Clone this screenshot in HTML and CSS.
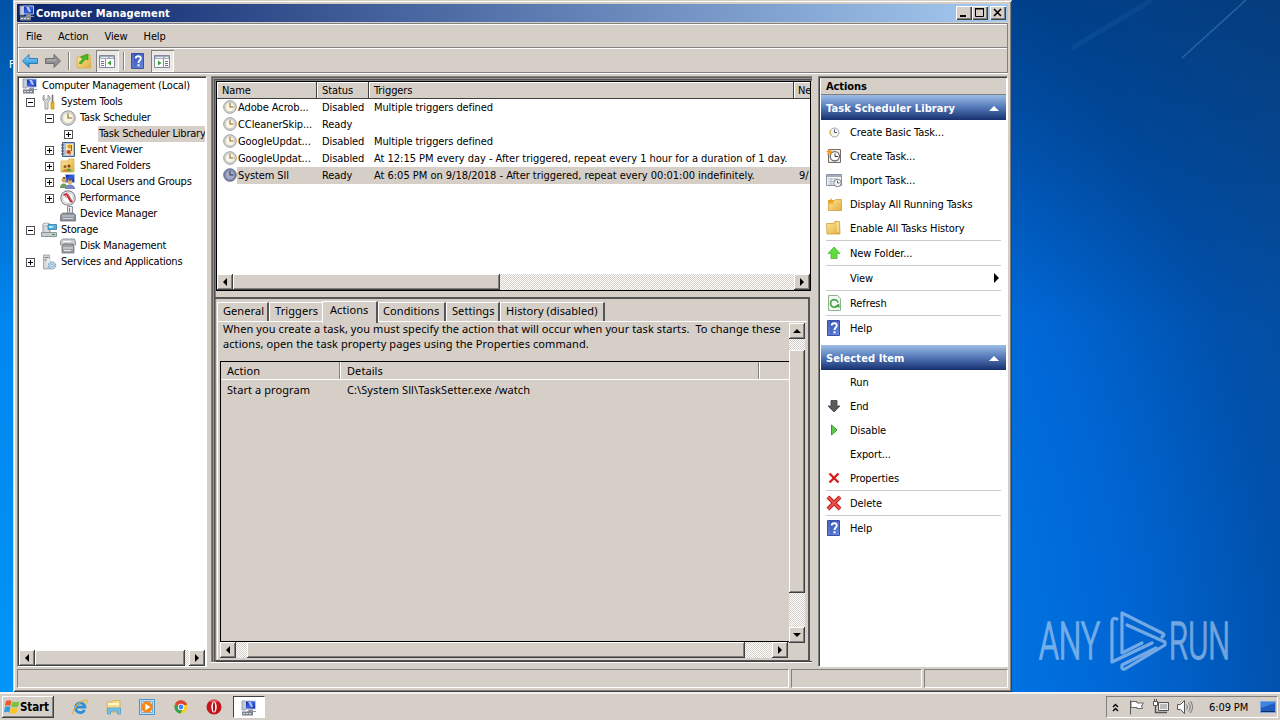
FILE: index.html
```html
<!DOCTYPE html>
<html lang="en">
<head>
  <meta charset="UTF-8">
  <title>Computer Management</title>
  <link rel="stylesheet" href="styles.css">
</head>
<body>
  <!-- Icon sprite -->
  <svg width="0" height="0" class="sprite">
    <defs>
      <linearGradient id="gBlue" x1="0" y1="0" x2="0" y2="1"><stop offset="0" stop-color="#8fdcff"/><stop offset="1" stop-color="#1583d0"/></linearGradient>
      <linearGradient id="gHelp" x1="0" y1="0" x2="1" y2="1"><stop offset="0" stop-color="#2a48ae"/><stop offset="1" stop-color="#6a8ce0"/></linearGradient>
      <linearGradient id="gFolder" x1="0" y1="0" x2="1" y2="1"><stop offset="0" stop-color="#fbe79c"/><stop offset="1" stop-color="#e3ae3c"/></linearGradient>
      <linearGradient id="gScreen" x1="0" y1="0" x2="1" y2="1"><stop offset="0" stop-color="#0a1f9c"/><stop offset=".5" stop-color="#3c62e0"/><stop offset="1" stop-color="#10258c"/></linearGradient>
    </defs>
    <symbol id="i-computer" viewBox="0 0 16 16">
      <path d="M1 1h4v9H1z" fill="#c5cad6" stroke="#8a90a0" stroke-width=".8"/>
      <path d="M4.500 1h10v8h-10z" fill="url(#gScreen)" stroke="#b9c6e4"/>
      <path d="M7 2h3l2 5h-2z" fill="#a8c4fa"/>
      <path d="M8 9.500h4V11h3v1H6z" fill="#9298a4"/>
      <path d="M1 11.500h11v4H1z" fill="#7d8490"/>
      <path d="M2 13.500h9" stroke="#dce0e6" stroke-dasharray="2 1"/>
    </symbol>
    <symbol id="i-tools" viewBox="0 0 16 16">
      <path d="M3 1v4l2 1 2-1V1l2 2v3L7 8v7H4V8L2 6V3z" fill="#d9dcdf" stroke="#85898e" stroke-width=".8"/>
      <path d="M11 1h1v7h-1z" fill="#777" stroke="#777" stroke-width=".6"/>
      <path d="M10 8h3v7h-3z" fill="#f2b81c" stroke="#b98508" stroke-width=".7"/>
    </symbol>
    <symbol id="i-clock" viewBox="0 0 16 16">
      <circle cx="8" cy="8" r="7.200" fill="#dcdcdc" stroke="#8e9094" stroke-width="1"/>
      <circle cx="8" cy="8" r="5.400" fill="#fbf6e2" stroke="#c4c0b0" stroke-width=".8"/>
      <path d="M8 3.500V8h4" fill="none" stroke="#8b6a30" stroke-width="1.200"/>
    </symbol>
    <symbol id="i-clocksel" viewBox="0 0 16 16">
      <circle cx="8" cy="8" r="7.200" fill="#7c86a8" stroke="#5b668c" stroke-width="1"/>
      <circle cx="8" cy="8" r="5.400" fill="#a3abc4" stroke="#7a84a4" stroke-width=".8"/>
      <path d="M8 3.500V8h4" fill="none" stroke="#30395c" stroke-width="1.200"/>
    </symbol>
    <symbol id="i-event" viewBox="0 0 16 16">
      <path d="M2.500.5h12v14h-12z" fill="#a9c0e4" stroke="#4a6288"/>
      <path d="M1 3h3M1 6h3M1 9h3M1 12h3" stroke="#555"/>
      <path d="M6 2h7v11H6z" fill="#f6e7b0"/>
      <circle cx="9.500" cy="4.500" r="2" fill="#e39b1c"/>
      <circle cx="8.500" cy="10" r="2" fill="#d23a2a"/>
      <path d="M10 8v5M11.500 3v6" stroke="#c0522a"/>
    </symbol>
    <symbol id="i-shared" viewBox="0 0 16 16">
      <path d="M1 3h7l1-2h5v13H1z" fill="url(#gFolder)" stroke="#d8b04a" stroke-width=".8"/>
      <circle cx="5" cy="8.500" r="1.500" fill="#9a5a24"/><circle cx="9" cy="8" r="1.500" fill="#6e4a20"/>
      <path d="M6 13.500c0-4 5.500-4 5.500 0z" fill="#5a9a4a"/>
      <path d="M2.500 14c0-4 5-4 5 0z" fill="#d88a34"/>
    </symbol>
    <symbol id="i-users" viewBox="0 0 16 16">
      <path d="M5.500.5h9v8h-9z" fill="url(#gScreen)" stroke="#a8b8dc"/>
      <circle cx="4" cy="6" r="2.500" fill="#d8a060"/>
      <circle cx="10" cy="8" r="2.300" fill="#dfb070"/>
      <path d="M0 14c0-6 7-6 8 0z" fill="#6aa05a"/>
      <path d="M5 15c0-6 10-6 10 0z" fill="#7484c4"/>
      <path d="M3 3.800h2M9 5.800h2" stroke="#6a4a20" stroke-width="1.500"/>
    </symbol>
    <symbol id="i-perf" viewBox="0 0 16 16">
      <circle cx="8" cy="8" r="7.200" fill="#fff" stroke="#8a8a8e" stroke-width="1.200"/>
      <circle cx="8" cy="8" r="5.400" fill="none" stroke="#b8c4d0"/>
      <path d="M3.500 5l3-1 4 7 2 1" fill="none" stroke="#d01c2c" stroke-width="1.700"/>
      <path d="M6.500 8L4 4M12 11L8 4" stroke="#b03040" stroke-width=".8"/>
    </symbol>
    <symbol id="i-device" viewBox="0 0 16 16">
      <path d="M7.500.5h5v8h-5z" fill="#e8eaec" stroke="#8a9098"/>
      <path d="M9 2h1v4H9z" fill="#4a90b0"/>
      <path d="M.5 9l2-2h11l2 2v6H.5z" fill="#8d949c" stroke="#6d747c" stroke-width=".8"/>
      <path d="M2 10h12M3 12.500h10" stroke="#d4d8dc"/>
    </symbol>
    <symbol id="i-storage" viewBox="0 0 16 16">
      <path d="M2 2h7v9H2z" fill="#d6dade" stroke="#8b9298"/>
      <ellipse cx="5.500" cy="2.500" rx="3.500" ry="1.500" fill="#eef0f2" stroke="#8b9298" stroke-width=".7"/>
      <path d="M7 2.500h8.500v5H7z" fill="#4ab0e0" stroke="#3a7ea4" stroke-width=".8"/>
      <path d="M8 4h5l-2 2H8z" fill="#b9e6fa"/>
      <path d="M.5 10.500h15v4H.5z" fill="#c8cdd1" stroke="#8d949a"/>
      <path d="M11 12.500h3" stroke="#389838"/>
    </symbol>
    <symbol id="i-disk" viewBox="0 0 16 16">
      <path d="M.5 3l2-2h12l1 3v3H.5z" fill="#c9cccf" stroke="#7f8488" stroke-width=".8"/>
      <path d="M3 3.500h8" stroke="#fff"/>
      <path d="M2 8l2-2h9l1 3v6H2z" fill="#9b9fa3" stroke="#6e7276" stroke-width=".8"/>
      <path d="M3 10h10M4 12.500h7" stroke="#eceeee"/>
    </symbol>
    <symbol id="i-services" viewBox="0 0 16 16">
      <path d="M2.500 1h6v14h-6z" fill="#d4d8da" stroke="#93999c" stroke-width=".8"/>
      <path d="M3.500 3.500h4M3.500 6h4" stroke="#7b8286"/>
      <path d="M6 4l4 1v7H5z" fill="#e6eaec"/>
      <circle cx="11" cy="11.500" r="3.300" fill="#c8dff0" stroke="#8fb4cc" stroke-width="2" stroke-dasharray="1.800 .8"/>
      <circle cx="11" cy="11.500" r="1.200" fill="#fff" stroke="#6f98b4" stroke-width=".7"/>
    </symbol>
    <symbol id="i-back" viewBox="0 0 16 16"><path d="M.5 8L7 1.500v4h8.500v5H7v4z" fill="url(#gBlue)" stroke="#1a68a4" stroke-width=".8"/></symbol>
    <symbol id="i-forward" viewBox="0 0 16 16"><path d="M15.500 8L9 1.500v4H.5v5H9v4z" fill="#929292" stroke="#5c5c5c" stroke-width=".8"/><path d="M2 7h9" stroke="#b8b8b8"/></symbol>
    <symbol id="i-up" viewBox="0 0 16 16">
      <path d="M1 4h5l1-2h7l1 13H1z" fill="url(#gFolder)" stroke="#d3b050" stroke-width=".8"/>
      <path d="M3 10l4-4-2.500-2L12 1v6L9.500 6 5 11z" fill="#3fbf2c" stroke="#218a18" stroke-width=".6"/>
    </symbol>
    <symbol id="i-panel-l" viewBox="0 0 16 16">
      <path d="M.5 2.500h15v12H.5z" fill="#fbfbfb" stroke="#8089a0"/>
      <path d="M1 3h14v3H1z" fill="#a4acbc"/><path d="M2 4.500h7M11 4.500h3" stroke="#e8ecf4"/>
      <path d="M6.500 6v8" stroke="#8a8f9c"/><path d="M2 8.500h3M2 10.500h3M2 12.500h3" stroke="#6a7690"/>
      <path d="M12 7.500v5L8.500 10z" fill="#3aa03a"/>
    </symbol>
    <symbol id="i-panel-r" viewBox="0 0 16 16">
      <path d="M.5 2.500h15v12H.5z" fill="#fbfbfb" stroke="#8089a0"/>
      <path d="M1 3h14v3H1z" fill="#a4acbc"/><path d="M2 4.500h7M11 4.500h3" stroke="#e8ecf4"/>
      <path d="M9.500 6v8" stroke="#8a8f9c"/><path d="M11 8.500h3M11 10.500h3M11 12.500h3" stroke="#6a7690"/>
      <path d="M4 7.500v5L7.500 10z" fill="#3aa03a"/>
    </symbol>
    <symbol id="i-help" viewBox="0 0 16 16">
      <path d="M1.500.5h12v15h-12z" fill="url(#gHelp)" stroke="#3b52a4"/>
      <path d="M3 1v14" stroke="#7b94da" stroke-width=".8"/>
      <path d="M5.700 5.500C5.700 2.500 10.800 2.500 10.800 5.500c0 2-2.300 2-2.300 4.500" fill="none" stroke="#fff" stroke-width="1.800"/>
      <path d="M7.500 11.300h2v2h-2z" fill="#fff"/>
    </symbol>
    <symbol id="i-basic" viewBox="0 0 16 16">
      <circle cx="8.500" cy="8.500" r="4.500" fill="#f4f3ec" stroke="#9aa4b4"/>
      <path d="M8.500 5.500v3H11" fill="none" stroke="#4c5c80"/><path d="M5 11a4.500 4.500 0 0 1-.5-5" fill="none" stroke="#e0b23c"/>
    </symbol>
    <symbol id="i-create" viewBox="0 0 16 16">
      <path d="M2.500 1.500h12v13h-12z" fill="#eceef0" stroke="#7a6a62"/>
      <circle cx="8.800" cy="8.200" r="4.600" fill="#fff" stroke="#5f6672" stroke-width="1.200"/>
      <path d="M9 5.500v3h3" fill="none" stroke="#333"/>
      <path d="M3.500 0l1 2.500L7 3 5 4.500 5.500 7l-2-1.500L1 7l.8-2.500L0 3l2.500-.5z" fill="#f39a1c"/>
    </symbol>
    <symbol id="i-import" viewBox="0 0 16 16">
      <path d="M.5 2.500h15v11H.5z" fill="#f6f7f9" stroke="#8d95a4"/>
      <path d="M1 4h14" stroke="#a4acb8" stroke-width="2"/>
      <path d="M2 7h10M2 9.500h6M2 12h5M5 6v7" stroke="#a4acb8" stroke-width=".8"/>
      <circle cx="11.500" cy="11" r="3.700" fill="#f8f8f8" stroke="#777e8c"/><path d="M11.500 8.800V11h2" fill="none" stroke="#555c6c"/>
    </symbol>
    <symbol id="i-folder" viewBox="0 0 16 16">
      <path d="M.5 3.500h7l1-2h5l.5 12.500H1z" fill="url(#gFolder)" stroke="#cfa040" stroke-width=".8"/><path d="M12 2v10" stroke="#fff2bc"/>
    </symbol>
    <symbol id="i-folder-run" viewBox="0 0 16 16">
      <path d="M2.500 4.500h6l1-1h6v11h-13z" fill="url(#gFolder)" stroke="#cfa040" stroke-width=".8"/>
      <path d="M5 2l1 2 2.500.3L7 6l.4 2.300L5 7.200 2.700 8.300 3 6 1.500 4.300 4 4z" fill="#f0a31c"/>
    </symbol>
    <symbol id="i-new" viewBox="0 0 16 16"><path d="M8 2l6 6.500h-3V13.500H5V8.500H2z" fill="#5fdc3c" stroke="#4ab43a" stroke-width=".8"/></symbol>
    <symbol id="i-refresh" viewBox="0 0 16 16">
      <path d="M2.500.5h9l3 3v12h-12z" fill="#f4f8f2" stroke="#8fb28c"/>
      <path d="M11.500 10.500A3.800 3.800 0 1 1 12 7.500" fill="none" stroke="#48a048" stroke-width="1.700"/><path d="M13.500 8.500v4.500l-4-2.500z" fill="#48a048"/>
    </symbol>
    <symbol id="i-end" viewBox="0 0 16 16"><path d="M8 14L2 8h3V2.500h6V8h3z" fill="#5a5a5a" stroke="#3f3f3f" stroke-width=".8"/></symbol>
    <symbol id="i-play" viewBox="0 0 16 16"><path d="M5.500 3l5.500 5-5.500 5z" fill="#5ccc48" stroke="#2f9a26"/></symbol>
    <symbol id="i-x" viewBox="0 0 16 16"><path d="M3.500 3.500l9 9M12.500 3.500l-9 9" stroke="#d41a1a" stroke-width="2.300"/></symbol>
    <symbol id="i-delete" viewBox="0 0 16 16"><path d="M2 2l12 12M14 2L2 14" stroke="#b81c1c" stroke-width="4"/><path d="M2 2l12 12M14 2L2 14" stroke="#ec5048" stroke-width="2.400"/></symbol>
    <symbol id="i-windows" viewBox="0 0 16 16">
      <path d="M2 2c2-1.300 3.500-1 5.500 0L6.300 7C4.500 6 3 6 .8 7z" fill="#ee5a28"/>
      <path d="M8.500 2.500c2 1 3.800 1 7 0L14 7.700c-2 1-4.800.8-6.700-.2z" fill="#7cc242"/>
      <path d="M1 8c2-1.200 3.600-1 5.500 0l-1.300 5.500c-2-1-3.400-1-5.200 0z" fill="#2f9be0"/>
      <path d="M7 8.500c2 1 4.300 1 6.800.2l-1.500 5.300c-2 1-4.600.8-6.500-.2z" fill="#fcc624"/>
    </symbol>
    <symbol id="i-ie" viewBox="0 0 16 16">
      <path d="M12.500 11A4.800 4.800 0 1 1 13 8.200H4.500" fill="none" stroke="#2a8fdc" stroke-width="2.800"/>
      <path d="M1.500 15C-1 13 5 4 12 1.500c4-1.300 3.500 1.500 2.500 3" fill="none" stroke="#e8b72c" stroke-width="1.200"/>
    </symbol>
    <symbol id="i-explorer" viewBox="0 0 16 16">
      <path d="M1 3h5l1-1.500h7V13H1z" fill="#f5dc84" stroke="#d6b14c" stroke-width=".8"/>
      <path d="M2 5h11" stroke="#fff6cc" stroke-width="2"/>
      <path d="M1.500 15V9h13v6h-3v-3h-7v3z" fill="#76c3ee" stroke="#4a9cd0" stroke-width=".8"/>
    </symbol>
    <symbol id="i-media" viewBox="0 0 16 16">
      <path d="M.5.5h15v15H.5z" fill="#bcdcf4" stroke="#4d94c8"/><path d="M2.500 2.500h11v11h-11z" fill="#e4f0fa" stroke="#7ab0d8"/>
      <circle cx="8" cy="8" r="5.800" fill="#f5871c"/><path d="M6.300 4.800v6.400L11.500 8z" fill="#fff"/>
    </symbol>
    <symbol id="i-chrome" viewBox="0 0 16 16">
      <circle cx="8" cy="8" r="6.500" fill="#f8cf28"/>
      <path d="M2 5A6.500 6.500 0 0 1 14.200 6H8L5 9z" fill="#dd4434"/><path d="M2 5.300a6.500 6.500 0 0 0 5.500 9.200L10 10l-4-.5z" fill="#30a250"/>
      <circle cx="8" cy="8" r="3.200" fill="#fff"/><circle cx="8" cy="8" r="2.400" fill="#4286f0"/>
    </symbol>
    <symbol id="i-opera" viewBox="0 0 16 16">
      <circle cx="8" cy="8" r="7.500" fill="#c4141c"/><path d="M3 3a7 7 0 0 1 10 0z" fill="#ec5a5a"/>
      <ellipse cx="8" cy="8" rx="2.700" ry="5.500" fill="#fff"/><ellipse cx="8" cy="8" rx="1.100" ry="4.800" fill="#a81018"/>
    </symbol>
    <symbol id="i-flag" viewBox="0 0 16 16"><path d="M1.500 1.500v14" stroke="#555"/><path d="M2 2.500h6v1.500h6.500l-2 3 1 2.500H8V8.500H2z" fill="#fff" stroke="#666"/></symbol>
    <symbol id="i-net" viewBox="0 0 16 16">
      <path d="M5.500 3.500h10v8h-10z" fill="#eee" stroke="#555"/><path d="M7 5h7v5H7z" fill="#bbb"/>
      <path d="M8 13.500h6M2.500 7v6.500H8" fill="none" stroke="#555" stroke-width="1.500"/><path d="M.5 2.500h4v4h-4zM1.500 0v2M3.500 0v2" fill="#fff" stroke="#555"/>
    </symbol>
    <symbol id="i-sound" viewBox="0 0 16 16">
      <path d="M.5 5.500h3l4-4v13l-4-4h-3z" fill="#fff" stroke="#555"/><path d="M9.500 5.500q2 2.500 0 5M11.500 3.500q3.500 4.500 0 9M13.500 2q4 6 0 12" fill="none" stroke="#777"/>
    </symbol>
    <symbol id="i-desktop" viewBox="0 0 16 16">
      <path d="M.5 2.500h15v11H.5z" fill="#1c5cbc" stroke="#7aa4dc"/><path d="M1 9l14-5V3H1z" fill="#3c84e0"/><path d="M1 12.500h14" stroke="#10305c"/>
    </symbol>
  </svg>

  <div class="desktop">
    <svg class="rays" width="268" height="80" viewBox="0 0 268 80"><path d="M234 0L170 58" stroke="#6fa6d8" stroke-opacity=".35" stroke-width="1.500"/><path d="M140 0L60 48" stroke="#3f8ad8" stroke-opacity=".12" stroke-width="5"/></svg>
    <span class="desk-label">F</span>
    <svg class="watermark" width="210" height="68" viewBox="0 0 210 68">
      <text x="1" y="51" textLength="61" lengthAdjust="spacingAndGlyphs">ANY</text>
      <g fill="none" stroke-linecap="round" stroke-linejoin="round">
        <path d="M79 11q-5-2-5 3v40l40-19"/>
        <path d="M124 29q4-2 0-4L84 5v40l20-10"/>
        <path d="M89 17l38 17v3L87 61q-4 1-3-4l34-17"/>
      </g>
      <text x="131" y="51" textLength="61" lengthAdjust="spacingAndGlyphs">RUN</text>
    </svg>
  </div>

  <div class="window">
    <div class="titlebar">
      <svg class="icon"><use href="#i-computer"/></svg>
      <span class="title">Computer Management</span>
      <div class="caption-buttons">
        <span class="cap"><svg width="12" height="10"><path d="M2 8h6v2H2z"/></svg></span>
        <span class="cap"><svg width="12" height="10"><path d="M1.500 1.500h8v8h-8z" fill="none" stroke="#000"/><path d="M1 1h9v1.500H1z"/></svg></span>
        <span class="cap close"><svg width="12" height="10"><path d="M2 2l7 7M9 2l-7 7" stroke="#000" stroke-width="1.600"/></svg></span>
      </div>
    </div>

    <div class="bars">
      <div class="menubar"><span>File</span><span>Action</span><span>View</span><span>Help</span></div>
      <div class="toolbar">
        <svg class="icon"><use href="#i-back"/></svg>
        <svg class="icon fwd"><use href="#i-forward"/></svg>
        <i class="sep"></i>
        <svg class="icon"><use href="#i-up"/></svg>
        <span class="tool-on"><svg class="icon"><use href="#i-panel-l"/></svg></span>
        <i class="sep"></i>
        <svg class="icon"><use href="#i-help"/></svg>
        <span class="tool-on second"><svg class="icon"><use href="#i-panel-r"/></svg></span>
      </div>
    </div>

    <div class="panes">
      <!-- Console tree -->
      <div class="tree">
        <div class="nodes">
          <div class="node root"><svg class="icon"><use href="#i-computer"/></svg><span>Computer Management (Local)</span></div>
          <div class="node l1"><i class="exp"></i><svg class="icon"><use href="#i-tools"/></svg><span>System Tools</span></div>
          <div class="node l2"><i class="exp"></i><svg class="icon"><use href="#i-clock"/></svg><span>Task Scheduler</span></div>
          <div class="node l3"><i class="exp plus"></i><svg class="icon"></svg><span class="selected">Task Scheduler Library</span></div>
          <div class="node l2"><i class="exp plus"></i><svg class="icon"><use href="#i-event"/></svg><span>Event Viewer</span></div>
          <div class="node l2"><i class="exp plus"></i><svg class="icon"><use href="#i-shared"/></svg><span>Shared Folders</span></div>
          <div class="node l2"><i class="exp plus"></i><svg class="icon"><use href="#i-users"/></svg><span>Local Users and Groups</span></div>
          <div class="node l2"><i class="exp plus"></i><svg class="icon"><use href="#i-perf"/></svg><span>Performance</span></div>
          <div class="node l2"><i class="exp none"></i><svg class="icon"><use href="#i-device"/></svg><span>Device Manager</span></div>
          <div class="node l1"><i class="exp"></i><svg class="icon"><use href="#i-storage"/></svg><span>Storage</span></div>
          <div class="node l2"><i class="exp none"></i><svg class="icon"><use href="#i-disk"/></svg><span>Disk Management</span></div>
          <div class="node l1"><i class="exp plus"></i><svg class="icon"><use href="#i-services"/></svg><span>Services and Applications</span></div>
        </div>
        <div class="hscroll">
          <span class="sbtn left"></span><span class="thumb tree-thumb"></span><span class="sbtn right"></span>
        </div>
      </div>

      <!-- Task list and details -->
      <div class="center">
        <div class="list">
          <div class="list-row head"><span>Name</span><span>Status</span><span>Triggers</span><span>Ne</span></div>
          <div class="list-row"><span><svg class="icon"><use href="#i-clock"/></svg>Adobe Acrob...</span><span>Disabled</span><span>Multiple triggers defined</span><span></span></div>
          <div class="list-row"><span><svg class="icon"><use href="#i-clock"/></svg>CCleanerSkip...</span><span>Ready</span><span></span><span></span></div>
          <div class="list-row"><span><svg class="icon"><use href="#i-clock"/></svg>GoogleUpdat...</span><span>Disabled</span><span>Multiple triggers defined</span><span></span></div>
          <div class="list-row"><span><svg class="icon"><use href="#i-clock"/></svg>GoogleUpdat...</span><span>Disabled</span><span class="long">At 12:15 PM every day - After triggered, repeat every 1 hour for a duration of 1 day.</span><span></span></div>
          <div class="list-row active"><span><svg class="icon"><use href="#i-clocksel"/></svg>System Sll</span><span>Ready</span><span class="long">At 6:05 PM on 9/18/2018 - After triggered, repeat every 00:01:00 indefinitely.</span><span>9/</span></div>
          <div class="hscroll list-scroll">
            <span class="sbtn left"></span><span class="thumb list-thumb"></span><span class="sbtn right"></span>
          </div>
        </div>

        <div class="details">
          <div class="tabs">
            <span class="tab general">General</span><span class="tab triggers">Triggers</span><span class="tab current">Actions</span><span class="tab conditions">Conditions</span><span class="tab settings">Settings</span><span class="tab history">History (disabled)</span>
          </div>
          <div class="page">
            <div class="page-main">
              <p>When you create a task, you must specify the action that will occur when your task starts.&nbsp; To change these<br>actions, open the task property pages using the Properties command.</p>
              <div class="table">
                <div class="table-head"><span>Action</span><span>Details</span><span></span></div>
                <div class="table-row"><span>Start a program</span><span>C:\System Sll\TaskSetter.exe /watch</span></div>
              </div>
              <div class="hscroll page-hscroll">
                <span class="sbtn left"></span><span class="thumb page-thumb"></span><span class="sbtn right"></span>
              </div>
            </div>
            <div class="vscroll"><span class="sbtn up"></span><span class="thumb v-thumb"></span><span class="sbtn down"></span></div>
          </div>
        </div>
      </div>

      <!-- Actions pane -->
      <div class="actions">
        <div class="actions-title">Actions</div>
        <div class="group-title"><span>Task Scheduler Library</span><i></i></div>
        <div class="act"><svg class="icon"><use href="#i-basic"/></svg>Create Basic Task...</div>
        <div class="act"><svg class="icon"><use href="#i-create"/></svg>Create Task...</div>
        <div class="act"><svg class="icon"><use href="#i-import"/></svg>Import Task...</div>
        <div class="act"><svg class="icon"><use href="#i-folder-run"/></svg>Display All Running Tasks</div>
        <div class="act"><svg class="icon"><use href="#i-folder"/></svg>Enable All Tasks History</div>
        <hr>
        <div class="act"><svg class="icon"><use href="#i-new"/></svg>New Folder...</div>
        <hr>
        <div class="act"><svg class="icon"></svg>View<i class="submenu"></i></div>
        <hr>
        <div class="act"><svg class="icon"><use href="#i-refresh"/></svg>Refresh</div>
        <hr>
        <div class="act"><svg class="icon"><use href="#i-help"/></svg>Help</div>
        <div class="group-title next"><span>Selected Item</span><i></i></div>
        <div class="act"><svg class="icon"></svg>Run</div>
        <div class="act"><svg class="icon"><use href="#i-end"/></svg>End</div>
        <div class="act"><svg class="icon"><use href="#i-play"/></svg>Disable</div>
        <div class="act"><svg class="icon"></svg>Export...</div>
        <div class="act"><svg class="icon"><use href="#i-x"/></svg>Properties</div>
        <hr>
        <div class="act"><svg class="icon"><use href="#i-delete"/></svg>Delete</div>
        <hr>
        <div class="act"><svg class="icon"><use href="#i-help"/></svg>Help</div>
      </div>
    </div>

    <div class="statusbar"><span class="s1"></span><span class="s2"></span><span class="s3"></span></div>
  </div>

  <div class="taskbar">
    <div class="start"><svg class="icon"><use href="#i-windows"/></svg><span>Start</span></div>
    <div class="quick">
      <svg class="icon"><use href="#i-ie"/></svg>
      <svg class="icon"><use href="#i-explorer"/></svg>
      <svg class="icon"><use href="#i-media"/></svg>
      <svg class="icon"><use href="#i-chrome"/></svg>
      <svg class="icon"><use href="#i-opera"/></svg>
    </div>
    <div class="running"><svg class="icon"><use href="#i-computer"/></svg></div>
    <div class="tray">
      <svg class="chev" width="7" height="9"><path d="M1 4l2.500-2.500L6 4M1 8l2.500-2.500L6 8" fill="none" stroke="#000" stroke-width="1.400"/></svg>
      <svg class="icon"><use href="#i-flag"/></svg>
      <svg class="icon"><use href="#i-net"/></svg>
      <svg class="icon"><use href="#i-sound"/></svg>
      <span class="time">6:09 PM</span>
      <svg class="icon"><use href="#i-desktop"/></svg>
    </div>
  </div>
</body>
</html>
```

FILE: styles.css
```css
/* General Styles */
* {
  box-sizing: border-box;
}

body {
  margin: 0;
  width: 1280px;
  height: 720px;
  overflow: hidden;
  position: relative;
  font: 11px/16px "DejaVu Sans Condensed", "DejaVu Sans", sans-serif;
  font-stretch: condensed;
  letter-spacing: -0.1px;
  color: #000;
  white-space: nowrap;
}

.sprite {
  position: absolute;
}

.icon {
  width: 16px;
  height: 16px;
  flex: none;
}

/* Desktop */
.desktop {
  position: absolute;
  inset: 0;
  background:
    linear-gradient(rgba(0, 50, 110, 0.55), rgba(0, 50, 110, 0) 45%),
    radial-gradient(circle at 150px 720px, #08a4ff 0, #0090f4 200px, #0078e8 800px, #0066d4 980px, #0050aa 1140px, #0c4a90 1350px);
}

.rays {
  position: absolute;
  right: 0;
  top: 0;
}

.desk-label {
  position: absolute;
  left: 9px;
  top: 57px;
  color: #fff;
}

.watermark {
  position: absolute;
  left: 1038px;
  top: 608px;
  opacity: 0.55;
}

.watermark text {
  font: 300 52px Roboto, sans-serif;
  letter-spacing: 0;
  fill: #cfe2f7;
  stroke: #cfe2f7;
  stroke-width: 1.6;
}

.watermark g {
  stroke: #cfe2f7;
  stroke-width: 3.2;
}

/* Window */
.window {
  position: absolute;
  left: 13px;
  top: 0;
  width: 999px;
  height: 692px;
  padding: 4px;
  background: #d6cfc8;
  box-shadow: inset 1px 1px #d6cfc8, inset -1px -1px #404040, inset 2px 2px #fff, inset -2px -2px #808080;
  display: flex;
  flex-direction: column;
}

.titlebar {
  height: 18px;
  padding: 0 2px;
  background: linear-gradient(90deg, #0a246a, #a6caf0);
  display: flex;
  align-items: center;
}

.title {
  margin-left: 1px;
  padding-top: 1px;
  color: #fff;
  font-weight: bold;
  letter-spacing: 0.15px;
}

.caption-buttons {
  display: flex;
  margin-left: auto;
}

.cap {
  width: 16px;
  height: 14px;
  padding: 1px 2px;
  line-height: 0;
  background: #d6cfc8;
  box-shadow: inset 1px 1px #fff, inset -1px -1px #404040, inset -2px -2px #808080;
}

.close {
  margin-left: 2px;
}

.bars {
  height: 50px;
  margin-top: 1px;
  border: 1px solid #808080;
  box-shadow: inset 1px 1px #fff, 0 1px #fff;
}

.menubar {
  height: 24px;
  padding: 2px 0 0 8px;
  border-bottom: 1px solid #808080;
  display: flex;
  align-items: center;
  gap: 16px;
}

.toolbar {
  height: 24px;
  padding-left: 4px;
  border-top: 1px solid #fff;
  display: flex;
  align-items: center;
}

.fwd {
  margin-left: 7px;
}

.sep {
  width: 2px;
  height: 18px;
  margin: 0 6px 0 7px;
  border-left: 1px solid #808080;
  border-right: 1px solid #fff;
}

.tool-on {
  width: 23px;
  height: 22px;
  margin-left: 4px;
  padding: 3px;
  background: #ece8e4;
  box-shadow: inset 1px 1px #808080, inset -1px -1px #fff;
}

.tool-on + .sep {
  margin: 0 5px 0 4px;
}

.second {
  margin-left: 5px;
}

/* Panes */
.panes {
  height: 591px;
  margin-top: 3px;
  display: flex;
}

.tree {
  width: 190px;
  margin-right: 4px;
  border: 1px solid;
  border-color: #808080 #fff #fff #808080;
  box-shadow: inset 1px 1px #404040;
  padding: 1px 1px 0;
  background: #fff;
  display: flex;
  flex-direction: column;
  letter-spacing: -0.23px;
}

.nodes {
  flex: 1;
  overflow: hidden;
}

.node {
  height: 16px;
  display: flex;
  align-items: center;
}

.root {
  padding-left: 3px;
}

.l1 {
  padding-left: 7px;
}

.l2 {
  padding-left: 26px;
}

.l3 {
  padding-left: 45px;
}

.node .icon {
  margin-right: 3px;
}

.node span {
  padding: 0 1px;
}

.node .selected {
  background: #d6cfc8;
}

.exp {
  flex: none;
  width: 9px;
  height: 9px;
  margin-right: 6px;
  border: 1px solid #555;
  background: linear-gradient(#000, #000) center / 5px 1px no-repeat;
}

.plus {
  background: linear-gradient(#000, #000) center / 5px 1px no-repeat, linear-gradient(#000, #000) center / 1px 5px no-repeat;
}

.none {
  visibility: hidden;
}

/* Scrollbars */
.hscroll,
.vscroll {
  display: flex;
  background: repeating-conic-gradient(#fff 0 25%, #d6cfc8 0 50%) 0 0 / 2px 2px;
}

.hscroll {
  height: 16px;
}

.vscroll {
  width: 16px;
  flex-direction: column;
}

.sbtn,
.thumb {
  flex: none;
  background: #d6cfc8;
  box-shadow: inset -1px -1px #404040, inset 1px 1px #fff, inset -2px -2px #808080;
}

.sbtn {
  width: 16px;
  height: 16px;
  display: flex;
  align-items: center;
  justify-content: center;
}

.sbtn::before {
  content: "";
  border: 4px solid transparent;
}

.left::before {
  border-right-color: #000;
  border-left-width: 0;
}

.right::before {
  border-left-color: #000;
  border-right-width: 0;
}

.up::before {
  border-bottom-color: #000;
  border-top-width: 0;
}

.down::before {
  border-top-color: #000;
  border-bottom-width: 0;
}

.hscroll .right {
  margin-left: auto;
}

.tree-thumb {
  width: 150px;
}

.list-thumb {
  width: 267px;
}

.page-thumb {
  width: 498px;
  margin-left: 11px;
}

/* Center pane */
.center {
  width: 601px;
  height: 586px;
  padding: 5px 0 0 5px;
  background: #d6cfc8;
  box-shadow: inset 1px 1px #808080, inset 2px 2px #606060, inset 3px 3px #909090, inset 4px 4px #505050, inset 5px 5px #808080, inset 0 -1px #404040, 0 1px #fff;
}

.list {
  width: 595px;
  height: 210px;
  border: 1px solid #000;
  background: #fff;
  overflow: hidden;
  display: flex;
  flex-direction: column;
}

.list-row {
  height: 17px;
  flex: none;
  display: grid;
  grid-template-columns: 100px 52px 425px 16px;
  align-items: center;
}

.list-row > span {
  height: 17px;
  padding: 1px 0 0 5px;
  display: flex;
  align-items: center;
  overflow: hidden;
}

.list-row .icon {
  width: 14px;
  height: 14px;
  margin: 0 1px 2px;
}

.long {
  letter-spacing: -0.02px;
}

.head {
  background: #d6cfc8;
  border-bottom: 1px solid #404040;
}

.list-row.head span {
  height: 16px;
  padding-top: 2px;
  border-right: 1px solid #404040;
  box-shadow: inset 1px 1px #fff;
}

.list-row.head span:last-child {
  border: 0;
  padding-left: 4px;
}

.active > span {
  background: #d6cfc8;
}

.active > span:first-child {
  background: linear-gradient(90deg, #fff 20px, #d6cfc8 20px);
}

.list-scroll {
  margin-top: auto;
}

/* Task details */
.details {
  height: 364px;
  margin: 6px 2px 0 -2px;
  padding: 2px 1px 0 2px;
  border: 1px solid #555;
  border-width: 2px 2px 1px 1px;
  font-family: "Noto Sans", sans-serif;
  font-stretch: normal;
  letter-spacing: 0.08px;
}

.tabs {
  height: 20px;
  display: flex;
  align-items: flex-end;
}

.tab {
  height: 19px;
  padding-left: 5px;
  border: solid;
  border-width: 1px 2px 0 1px;
  border-color: #fff #555 #fff #fff;
}

.general {
  width: 52px;
}

.triggers {
  width: 53px;
  border-right: 0;
}

.current {
  width: 56px;
  height: 22px;
  padding-left: 7px;
  align-self: flex-start;
  background: #d6cfc8;
  position: relative;
}

.conditions {
  width: 68px;
  padding-left: 4px;
}

.settings {
  width: 54px;
}

.history {
  width: 105px;
}

.page {
  height: 338px;
  border-top: 1px solid #fff;
  border-left: 1px solid #fff;
  display: flex;
}

.page-main {
  width: 571px;
  padding-left: 2px;
}

.page p {
  margin: -1px 0 0 3px;
  height: 40px;
  line-height: 15px;
}

.table {
  height: 281px;
  border: 1px solid #000;
  border-right: 0;
}

.table-head {
  height: 18px;
  border-bottom: 1px solid #fff;
  display: flex;
  align-items: center;
}

.table-head span {
  padding-left: 6px;
  height: 17px;
  line-height: 18px;
  border-right: 1px solid #808080;
  box-shadow: 1px 0 #fff;
}

.table-head span:nth-child(1) {
  width: 119px;
}

.table-head span:nth-child(2) {
  width: 419px;
  padding-left: 7px;
}

.table-head span:nth-child(3) {
  border: 0;
  box-shadow: none;
}

.table-row {
  display: flex;
  padding: 2px 0 0 6px;
}

.table-row span:first-child {
  width: 120px;
}

.page-hscroll {
  margin-right: 1px;
}

.vscroll {
  height: 320px;
  margin-top: 1px;
}

.v-thumb {
  height: 243px;
  margin: 11px 0 auto;
}

/* Actions pane */
.actions {
  width: 190px;
  margin-left: 6px;
  border: 1px solid #808080;
  border-right-color: #fff;
  border-bottom-color: #fff;
  box-shadow: inset 1px 1px #404040;
  padding: 1px 1px 0 2px;
  background: #fff;
}

.actions-title {
  height: 17px;
  padding: 1px 0 0 5px;
  background: #d6cfc8;
  border-bottom: 1px solid #808080;
  font-weight: bold;
}

.group-title {
  height: 25px;
  padding: 2px 7px 0 5px;
  background: linear-gradient(#9cbde6, #5377b8 50%, #16306e);
  color: #fff;
  font-weight: bold;
  letter-spacing: 0.1px;
  display: flex;
  align-items: center;
  justify-content: space-between;
}

.group-title i {
  border: 5px solid transparent;
  border-top: 0;
  border-bottom-color: #fff;
}

.next {
  margin-top: 5px;
}

.act {
  height: 24px;
  padding: 1px 0 0 5px;
  display: flex;
  align-items: center;
}

.act .icon {
  margin: 0 8px 1px 0;
}

.submenu {
  margin: 0 7px 1px auto;
  border: 5px solid transparent;
  border-left-color: #000;
  border-right: 0;
}

hr {
  height: 1px;
  margin: 0 5px;
  border: 0;
  background: #ccc;
}

/* Status bar */
.statusbar {
  height: 19px;
  margin-top: 2px;
  display: flex;
  gap: 2px;
}

.statusbar span {
  border: 1px solid;
  border-color: #808080 #fff #fff #808080;
}

.s1 {
  width: 772px;
}

.s2 {
  width: 131px;
}

.s3 {
  flex: 1;
}

/* Taskbar */
.taskbar {
  position: absolute;
  left: 0;
  top: 692px;
  width: 1280px;
  height: 28px;
  padding: 4px 2px 2px;
  background: #d6cfc8;
  box-shadow: inset 0 2px #f4f2f0;
  display: flex;
}

.start {
  width: 52px;
  height: 22px;
  padding: 0 2px;
  font-size: 11.5px;
  font-weight: bold;
  box-shadow: inset -1px -1px #404040, inset 1px 1px #fff, inset -2px -2px #808080;
  display: flex;
  align-items: center;
}

.quick {
  margin-left: 18px;
  display: flex;
  align-items: center;
  gap: 17.5px;
}

.running {
  width: 32px;
  height: 22px;
  margin-left: 11px;
  padding: 3px 7px;
  background: #fff;
  border: 1px solid;
  border-color: #404040 #fff #fff #404040;
}

.running .icon {
  display: block;
}

.tray {
  width: 172px;
  height: 22px;
  margin-left: auto;
  padding: 0 0 0 5px;
  border: 1px solid;
  border-color: #808080 #fff #fff #808080;
  display: flex;
  align-items: center;
}

.tray .icon {
  margin-right: 8px;
}

.chev {
  margin-right: 10px;
}

.time {
  flex: 1;
  padding: 1px 0 0 8px;
}

.tray .icon:last-child {
  margin: 0 1px 0 0;
}
```
